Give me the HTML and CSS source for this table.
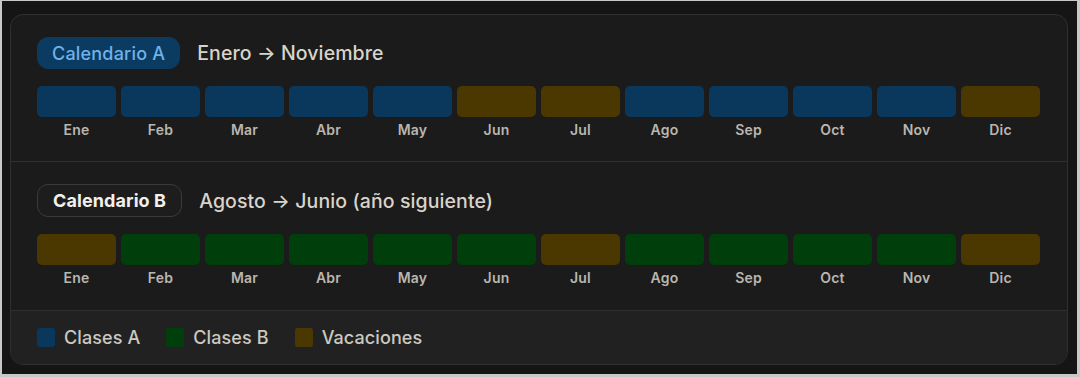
FILE: index.html
```html
<!DOCTYPE html>
<html lang="es">
<head>
<meta charset="utf-8">
<title>Calendarios</title>
<link rel="stylesheet" href="styles.css">
</head>
<body>
<div class="frame">
  <div class="card">
    <section class="cal">
      <div class="cal-head">
        <span class="badge badge-a">Calendario A</span>
        <span class="range">Enero → Noviembre</span>
      </div>
      <div class="months">
        <div class="month"><div class="bar a"></div><span>Ene</span></div>
        <div class="month"><div class="bar a"></div><span>Feb</span></div>
        <div class="month"><div class="bar a"></div><span>Mar</span></div>
        <div class="month"><div class="bar a"></div><span>Abr</span></div>
        <div class="month"><div class="bar a"></div><span>May</span></div>
        <div class="month"><div class="bar v"></div><span>Jun</span></div>
        <div class="month"><div class="bar v"></div><span>Jul</span></div>
        <div class="month"><div class="bar a"></div><span>Ago</span></div>
        <div class="month"><div class="bar a"></div><span>Sep</span></div>
        <div class="month"><div class="bar a"></div><span>Oct</span></div>
        <div class="month"><div class="bar a"></div><span>Nov</span></div>
        <div class="month"><div class="bar v"></div><span>Dic</span></div>
      </div>
    </section>
    <section class="cal cal-b">
      <div class="cal-head">
        <span class="badge badge-b">Calendario B</span>
        <span class="range">Agosto → Junio (año siguiente)</span>
      </div>
      <div class="months">
        <div class="month"><div class="bar v"></div><span>Ene</span></div>
        <div class="month"><div class="bar b"></div><span>Feb</span></div>
        <div class="month"><div class="bar b"></div><span>Mar</span></div>
        <div class="month"><div class="bar b"></div><span>Abr</span></div>
        <div class="month"><div class="bar b"></div><span>May</span></div>
        <div class="month"><div class="bar b"></div><span>Jun</span></div>
        <div class="month"><div class="bar v"></div><span>Jul</span></div>
        <div class="month"><div class="bar b"></div><span>Ago</span></div>
        <div class="month"><div class="bar b"></div><span>Sep</span></div>
        <div class="month"><div class="bar b"></div><span>Oct</span></div>
        <div class="month"><div class="bar b"></div><span>Nov</span></div>
        <div class="month"><div class="bar v"></div><span>Dic</span></div>
      </div>
    </section>
    <footer class="legend">
      <div class="legend-item"><span class="swatch a"></span>Clases A</div>
      <div class="legend-item"><span class="swatch b"></span>Clases B</div>
      <div class="legend-item"><span class="swatch v"></span>Vacaciones</div>
    </footer>
  </div>
</div>
</body>
</html>
```
FILE: styles.css
```css
* { box-sizing: border-box; }
html, body { margin: 0; padding: 0; }
body {
  background: #c8c8c8;
  width: 1080px;
  height: 377px;
  font-family: Inter, "Liberation Sans", sans-serif;
  padding: 1px 3px 3px 2px;
}
.frame {
  background: #151515;
  height: 373px;
  padding: 13px 9px 0 8px;
}
.card {
  border: 1px solid #2f2f2f;
  border-radius: 13px;
  background: #1b1b1b;
  overflow: hidden;
  height: 351px;
  display: flex;
  flex-direction: column;
}
.cal {
  padding: 22px 25px 23px 26px;
  border-bottom: 1px solid #2f2f2f;
}
.cal-b {
  padding-bottom: 24px;
}
.cal-head {
  display: flex;
  align-items: center;
  gap: 17px;
}
.badge {
  height: 32px;
  padding: 0 14px;
  border-radius: 11px;
  display: inline-flex;
  align-items: center;
  font-size: 18px;
  letter-spacing: 0.2px;
}
.badge-a {
  background: #0b3b60;
  border: 1px solid #0b3b60;
  color: #6eb2ea;
  font-weight: 500;
}
.badge-b {
  background: #1d1d1d;
  border: 1px solid #3a3a3a;
  color: #f2f0ec;
  font-weight: 700;
  letter-spacing: 0.1px;
  padding: 0 15px;
  height: 33px;
}
.range {
  font-size: 19.5px;
  font-weight: 500;
  color: #d8d4cb;
  letter-spacing: 0.1px;
}
.months {
  margin-top: 17px;
  display: grid;
  grid-template-columns: repeat(12, 79px);
  column-gap: 5px;
}
.month {
  display: flex;
  flex-direction: column;
  align-items: center;
}
.bar {
  width: 100%;
  height: 31px;
  border-radius: 5px;
}
.month span {
  margin-top: 5px;
  font-size: 14px;
  line-height: 16px;
  font-weight: 600;
  color: #b9b6af;
  letter-spacing: 0.2px;
}
.a { background: #0a385c; }
.b { background: #003f0c; }
.v { background: #4b3800; }
.legend {
  flex: 1;
  background: #212121;
  display: flex;
  align-items: center;
  gap: 26px;
  padding: 0 26px;
}
.legend-item {
  display: flex;
  align-items: center;
  gap: 9px;
  font-size: 18px;
  font-weight: 500;
  color: #cdc9c1;
  letter-spacing: 0.1px;
}
.swatch {
  width: 18px;
  height: 19px;
  border-radius: 3px;
}
```
